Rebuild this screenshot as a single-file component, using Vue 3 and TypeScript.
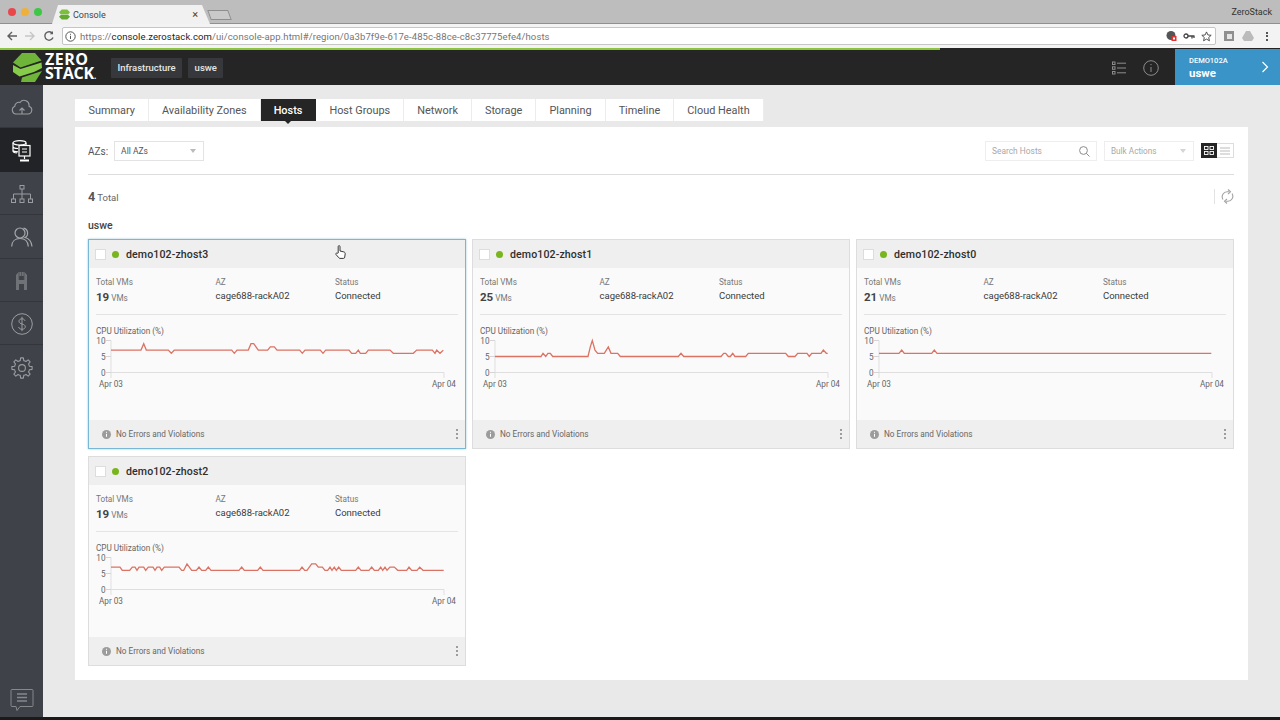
<script setup lang="ts">
interface Host {
  name: string
  vms: number
  selected: boolean
  start: number
  series: number[][]
}

const tabs: string[] = ['Summary', 'Availability Zones', 'Hosts', 'Host Groups', 'Network', 'Storage', 'Planning', 'Timeline', 'Cloud Health']
const yTicks: number[] = [10, 5, 0]

const hosts: Host[] = [
  {
    name: 'demo102-zhost3', vms: 19, selected: true, start: 78,
    series: [[78,7],[168,7],[176,9],[184,7],[250,7],[259,6],[268,7],[440,7],[448,6],[456,7],[490,7],[498,9],[506,9],[520,7],[548,7],[556,8],[568,8],[576,7],[644,7],[652,6],[660,7],[706,7],[714,6],[722,7],[792,7],[800,6],[812,6],[820,7],[826,6],[842,6],[850,7],[915,7],[925,6],[985,6],[995,7],[1042,7],[1050,6],[1055,7],[1065,6],[1075,7]],
  },
  {
    name: 'demo102-zhost1', vms: 25, selected: false, start: 76,
    series: [[76,5],[214,5],[220,6],[228,5],[235,6],[242,6],[249,5],[355,5],[362,8],[368,10],[376,7],[384,6],[404,6],[416,8],[424,6],[444,6],[452,5],[626,5],[634,6],[642,5],[754,5],[762,6],[768,6],[776,5],[782,5],[789,6],[796,5],[828,5],[836,6],[948,6],[956,5],[976,5],[984,6],[1012,6],[1019,5],[1026,6],[1054,6],[1061,7],[1070,6],[1074,6]],
  },
  {
    name: 'demo102-zhost0', vms: 21, selected: false, start: 73,
    series: [[73,6],[133,6],[141,7],[149,6],[231,6],[239,7],[247,6],[1070,6]],
  },
  {
    name: 'demo102-zhost2', vms: 19, selected: false, start: 78,
    series: [[78,7],[105,7],[112,6],[134,6],[142,7],[150,7],[156,6],[162,7],[176,7],[182,6],[190,7],[204,7],[210,6],[216,7],[224,7],[230,6],[238,7],[282,7],[290,6],[296,6],[306,8],[320,6],[334,6],[342,7],[350,6],[362,6],[370,7],[378,6],[462,6],[470,7],[478,6],[518,6],[526,7],[534,6],[644,6],[651,7],[659,6],[666,6],[680,8],[692,8],[700,7],[712,7],[720,6],[728,6],[735,7],[741,6],[748,7],[754,6],[761,7],[769,6],[812,6],[820,7],[828,6],[852,6],[860,7],[868,6],[880,6],[887,7],[893,6],[900,7],[906,6],[915,7],[928,7],[938,6],[965,6],[972,7],[980,6],[996,6],[1004,7],[1014,6],[1076,6]],
  },
]

function yOf(v: number): number {
  return 36.5 - v * 3.2
}

function points(h: Host): string {
  return h.series.map(([x, v]) => `${(15 + (x - h.start) / 3).toFixed(1)},${yOf(v).toFixed(1)}`).join(' ')
}

function gearPath(cx: number, cy: number, ro: number, ri: number, teeth: number): string {
  const out: string[] = []
  const step = (Math.PI * 2) / teeth
  for (let i = 0; i < teeth; i++) {
    const a = i * step - Math.PI / 2
    const pts: number[][] = [
      [ri, a - step * 0.5],
      [ri, a - step * 0.3],
      [ro, a - step * 0.17],
      [ro, a + step * 0.17],
      [ri, a + step * 0.3],
    ]
    for (const [r, t] of pts) {
      out.push(`${(cx + r * Math.cos(t)).toFixed(2)},${(cy + r * Math.sin(t)).toFixed(2)}`)
    }
  }
  return out.join(' ')
}
const gear = gearPath(11, 11, 10.2, 7.6, 8)
</script>

<template>
  <div class="page">
    <div class="tabstrip">
      <div class="lights">
        <span class="light red"></span>
        <span class="light amber"></span>
        <span class="light green"></span>
      </div>
      <div class="browser-tab">
        <svg class="favicon" width="11" height="11" viewBox="0 0 12 12">
          <path d="M3 .5h6l3 3-2 2.5H2L0 3.500z" fill="#7cbf3f" />
          <path d="M2 6.500h8l2 2-3 3H3l-3-3z" fill="#63a830" />
        </svg>
        <span class="tab-title">Console</span>
        <span class="tab-close">×</span>
      </div>
      <div class="new-tab"></div>
      <span class="chrome-user">ZeroStack</span>
    </div>

    <div class="toolbar">
      <svg class="nav-icon" width="12" height="12" viewBox="0 0 12 12" fill="none" stroke="#5f5f5f" stroke-width="1.400">
        <path d="M11 6H2M6 2 2 6l4 4" />
      </svg>
      <svg class="nav-icon" width="12" height="12" viewBox="0 0 12 12" fill="none" stroke="#c6c6c6" stroke-width="1.400">
        <path d="M1 6h9M6 2l4 4-4 4" />
      </svg>
      <svg class="nav-icon reload" width="12" height="12" viewBox="0 0 12 12" fill="none" stroke="#5f5f5f" stroke-width="1.400">
        <path d="M10 7.500A4.200 4.200 0 1 1 9.500 3.500" />
        <path d="M10 1v3.200H6.800" fill="#5f5f5f" stroke="none" />
      </svg>
      <div class="omnibox">
        <svg width="11" height="11" viewBox="0 0 11 11" fill="none" stroke="#555" stroke-width="1">
          <circle cx="5.500" cy="5.500" r="4.700" />
          <path d="M5.500 4.800v3.200M5.500 2.800v1" />
        </svg>
        <span class="url"><span class="url-dim">https://</span>console.zerostack.com<span class="url-dim">/ui/console-app.html#/region/0a3b7f9e-617e-485c-88ce-c8c37775efe4/hosts</span></span>
        <div class="omni-icons">
          <svg width="11" height="12" viewBox="0 0 11 12">
            <circle cx="5" cy="5.500" r="4.500" fill="#555" />
            <rect x="5.500" y="6" width="5" height="5" fill="#d33" />
            <rect x="7" y="7.500" width="2" height="2" fill="#fff" />
          </svg>
          <svg width="12" height="8" viewBox="0 0 12 8" fill="none" stroke="#444" stroke-width="1.300">
            <circle cx="3" cy="4" r="2" />
            <path d="M5 4h6.500M9 4v2.500M11 4v2" />
          </svg>
          <svg width="11" height="11" viewBox="0 0 12 12" fill="none" stroke="#444" stroke-width="1">
            <path d="M6 1l1.500 3.300 3.600.4-2.700 2.400.8 3.600L6 8.800l-3.200 1.900.8-3.600L.9 4.700l3.600-.4z" />
          </svg>
        </div>
      </div>
      <div class="ext-icons">
        <span class="ext ext-square"><span class="ext-inner"></span></span>
        <svg width="12" height="10" viewBox="0 0 12 10"><path d="M4 0h4l4 7-2 3H2L0 7z" fill="#bbb" /></svg>
        <span class="kebab-chrome"><i></i><i></i><i></i></span>
      </div>
    </div>

    <div class="loadbar"><div class="loadbar-fill"></div></div>

    <header class="appbar">
      <div class="brand">
        <svg width="29" height="29" viewBox="0 0 29 29">
          <polygon points="9,0 22,0 28.500,7.500 7.500,14.500 0,9.500" fill="#6fb53a" />
          <polygon points="0,12 7.500,16 28.500,9.500 29,15 21,19 6.500,23.500 0,19" fill="#86cc4a" />
          <polygon points="9,24.500 29,18 22,29 8,29" fill="#6fb53a" />
        </svg>
        <div class="wordmark"><span>ZERO</span><span>STACK<small>.</small></span></div>
      </div>
      <span class="chip">Infrastructure</span>
      <span class="chip">uswe</span>
      <div class="appbar-right">
        <svg class="bar-icon" width="14" height="14" viewBox="0 0 14 14" fill="none" stroke="#8d8d8d">
          <rect x=".5" y="1" width="2.500" height="2.500" />
          <rect x=".5" y="5.800" width="2.500" height="2.500" />
          <rect x=".5" y="10.500" width="2.500" height="2.500" />
          <path d="M5 2.200h9M5 7h9M5 11.800h9" />
        </svg>
        <svg class="bar-icon" width="16" height="16" viewBox="0 0 16 16" fill="none" stroke="#8d8d8d">
          <circle cx="8" cy="8" r="7.300" />
          <path d="M8 7v5M8 4v1.200" />
        </svg>
        <div class="region">
          <div class="region-text">
            <span class="region-org">DEMO102A</span>
            <span class="region-name">uswe</span>
          </div>
          <svg width="8" height="12" viewBox="0 0 8 12" fill="none" stroke="#fff" stroke-width="1.200">
            <path d="M1.500 1 6.500 6 1.500 11" />
          </svg>
        </div>
      </div>
    </header>

    <div class="workspace">
      <nav class="sidebar">
        <div class="side-item">
          <svg width="22" height="16" viewBox="0 0 22 16" fill="none" stroke="#9a9da1" stroke-width="1.100">
            <path d="M5 15h12a4 4 0 0 0 1-7.800A5 5 0 0 0 9 3.500 4 4 0 0 0 3.800 7.300 4 4 0 0 0 5 15z" />
            <path d="M11 15V9.500M8.500 11.500 11 9l2.500 2.500" />
          </svg>
        </div>
        <div class="side-item active">
          <svg width="19" height="22" viewBox="0 0 19 22" fill="none" stroke="#fff" stroke-width="1.200">
            <ellipse cx="7.500" cy="2.800" rx="6.500" ry="2.200" />
            <path d="M1 2.800V11c0 1 1.500 1.800 4 2M14 3v2M1 6.500c0 1 2 2 5 2M1 10c0 1 2 1.600 5 1.800" />
            <rect x="7" y="5.500" width="11" height="10.500" fill="#212326" />
            <path d="M10 9h5M10 12h5" />
            <path d="M12.500 16v3" />
            <path d="M8 20.500h9" stroke-width="2" />
          </svg>
        </div>
        <div class="side-item">
          <svg width="22" height="18" viewBox="0 0 22 18" fill="none" stroke="#9a9da1" stroke-width="1">
            <rect x="9" y=".5" width="4" height="3.500" />
            <rect x=".5" y="14" width="4" height="3.500" />
            <rect x="9" y="14" width="4" height="3.500" />
            <rect x="17.500" y="14" width="4" height="3.500" />
            <path d="M11 4v10M2.500 14V9h17v5" />
          </svg>
        </div>
        <div class="side-item">
          <svg width="22" height="20" viewBox="0 0 22 20" fill="none" stroke="#a5a8ac" stroke-width="1.200">
            <circle cx="9" cy="6" r="5" />
            <path d="M.7 19.500c0-5 3.500-8 8.300-8s8 3 8.300 8" />
            <path d="M12.500 1.200a5 5 0 0 1 1.500 9.300c4 1 6.500 4 7 9" />
          </svg>
        </div>
        <div class="side-item">
          <svg width="15" height="18" viewBox="0 0 15 18" fill="#6f7276">
            <path d="M2 3 4.500 0h6L13 3v15h-3v-6H5v6H2zM5 4v4h5V4z" />
            <path d="M5 0v8M7.500 0v4M10 0v8" stroke="#4d5056" stroke-width=".8" />
          </svg>
        </div>
        <div class="side-item">
          <svg width="22" height="22" viewBox="0 0 22 22" fill="none" stroke="#9a9da1" stroke-width="1">
            <circle cx="11" cy="11" r="10.300" />
            <path d="M14 7.800c-.5-1.500-1.700-2-3-2-1.700 0-3 1-3 2.500 0 3.500 6.300 2 6.300 5.500 0 1.500-1.500 2.500-3.300 2.500-1.500 0-3-.8-3.400-2.300M11 3.800v14.400" />
          </svg>
        </div>
        <div class="side-item last">
          <svg width="22" height="22" viewBox="0 0 22 22" fill="none" stroke="#9a9da1" stroke-width="1.100">
            <polygon :points="gear" stroke-linejoin="round" />
            <circle cx="11" cy="11" r="3.400" />
          </svg>
        </div>
        <div class="side-chat">
          <svg width="24" height="24" viewBox="0 0 24 24" fill="none" stroke="#85888c" stroke-width="1">
            <path d="M2 1.500h20a1 1 0 0 1 1 1v15a1 1 0 0 1-1 1H10l-3 4-1-4H2a1 1 0 0 1-1-1v-15a1 1 0 0 1 1-1z" />
            <path d="M7 6h10M7 9.500h10M7 13h10" stroke-width="1.500" />
          </svg>
        </div>
      </nav>

      <main class="content">
        <div class="tabs">
          <span v-for="t in tabs" :key="t" class="tab" :class="{ current: t === 'Hosts' }">{{ t }}</span>
        </div>

        <section class="panel">
          <div class="filters">
            <span class="az-label">AZs:</span>
            <div class="select az-select">
              <span>All AZs</span>
              <i class="caret"></i>
            </div>
            <div class="filters-right">
              <div class="search">
                <span>Search Hosts</span>
                <svg width="11" height="11" viewBox="0 0 11 11" fill="none" stroke="#8c8c8c">
                  <circle cx="4.500" cy="4.500" r="3.900" />
                  <path d="M7.300 7.300 10.500 10.500" />
                </svg>
              </div>
              <div class="select bulk">
                <span>Bulk Actions</span>
                <i class="caret"></i>
              </div>
              <div class="view-toggle">
                <span class="view on">
                  <svg width="10" height="9" viewBox="0 0 10 9" fill="none" stroke="#fff" stroke-width=".9">
                    <rect x=".5" y=".5" width="3.500" height="3" />
                    <rect x="6" y=".5" width="3.500" height="3" />
                    <rect x=".5" y="5.500" width="3.500" height="3" />
                    <rect x="6" y="5.500" width="3.500" height="3" />
                  </svg>
                </span>
                <span class="view">
                  <svg width="10" height="8" viewBox="0 0 10 8" fill="none" stroke="#bbb">
                    <path d="M0 1h10M0 4h10M0 7h10" />
                  </svg>
                </span>
              </div>
            </div>
          </div>

          <div class="summary">
            <span class="total"><b>4</b> Total</span>
            <div class="refresh">
              <svg width="13" height="15" viewBox="0 0 13 15" fill="none" stroke="#a2a2a2" stroke-width="1.100">
                <path d="M2 10.500A5 5 0 0 1 6.500 2.800h1.500M11 4.500a5 5 0 0 1-4.500 7.700H5" />
                <path d="M7 .5 9.500 2.800 7 5M6 10 3.500 12.200 6 14.500" />
              </svg>
            </div>
          </div>

          <h2 class="group">uswe</h2>

          <div class="grid">
            <article v-for="h in hosts" :key="h.name" class="card" :class="{ selected: h.selected }">
              <div class="card-head">
                <span class="check"></span>
                <span class="dot"></span>
                <span class="host-name">{{ h.name }}</span>
                <svg v-if="h.selected" class="cursor" width="11" height="14" viewBox="0 0 11 14" fill="#fff" stroke="#222" stroke-width=".9">
                  <path d="M3.200 8V1.600c0-1.300 1.800-1.300 1.800 0V6l3.800.9c1 .3 1.500 1 1.400 2l-.5 3.300c-.1.800-.5 1.200-1.300 1.200H5c-.6 0-1-.3-1.300-.8L1 9.500c-.6-1 .6-2 1.500-1.200z" />
                </svg>
              </div>
              <div class="card-body">
                <div class="stats">
                  <div class="stat">
                    <span class="stat-label">Total VMs</span>
                    <span class="stat-vms"><b>{{ h.vms }}</b> VMs</span>
                  </div>
                  <div class="stat">
                    <span class="stat-label">AZ</span>
                    <span class="stat-value">cage688-rackA02</span>
                  </div>
                  <div class="stat">
                    <span class="stat-label">Status</span>
                    <span class="stat-value">Connected</span>
                  </div>
                </div>
                <div class="cpu-title">CPU Utilization (%)</div>
                <svg class="chart" width="362" height="54" viewBox="0 0 362 54">
                  <path d="M15 4.500V36.500H348M348 36.500V42M15 36.500V42" fill="none" stroke="#dfdfdf" />
                  <g v-for="t in yTicks" :key="t">
                    <path :d="`M10 ${yOf(t)}H15`" stroke="#d5d5d5" />
                    <text class="tick" x="9.500" :y="yOf(t) + 3.200" text-anchor="end">{{ t }}</text>
                  </g>
                  <text class="tick" x="15" y="51" text-anchor="middle">Apr 03</text>
                  <text class="tick" x="348" y="51" text-anchor="middle">Apr 04</text>
                  <polyline :points="points(h)" fill="none" stroke="#dc7263" stroke-width="1.300" />
                </svg>
              </div>
              <div class="card-foot">
                <svg width="9" height="9" viewBox="0 0 9 9">
                  <circle cx="4.500" cy="4.500" r="4.500" fill="#9c9c9c" />
                  <path d="M4.500 3.800v3M4.500 1.800v1" stroke="#fff" />
                </svg>
                <span class="foot-text">No Errors and Violations</span>
                <span class="kebab"><i></i><i></i><i></i></span>
              </div>
            </article>
          </div>
        </section>
      </main>
    </div>
    <div class="screen-edge"></div>
  </div>
</template>

<style>
html, body { margin: 0; padding: 0; background: #111; }
</style>

<style scoped>
.page {
  width: 1280px;
  height: 720px;
  overflow: hidden;
  display: flex;
  flex-direction: column;
  font-family: Roboto, "Liberation Sans", sans-serif;
  color: #444;
  background: #e9e9e9;
}

/* browser chrome */
.tabstrip {
  height: 24px;
  flex: none;
  background: #bdbdbd;
  display: flex;
  align-items: flex-end;
  border-bottom: 1px solid #8f8f8f;
  box-sizing: border-box;
}
.lights {
  display: flex;
  gap: 5px;
  width: 52px;
  box-sizing: border-box;
  padding-left: 8px;
  align-self: flex-start;
  padding-top: 8px;
}
.light { width: 8px; height: 8px; border-radius: 50%; }
.red { background: #e8474c; }
.amber { background: #efb03a; }
.green { background: #3ec746; }
.browser-tab {
  width: 158px;
  height: 19px;
  background: #f1f1f1;
  clip-path: polygon(0 100%, 6px 0, 150px 0, 100% 100%);
  display: flex;
  align-items: center;
  padding: 0 12px 0 7px;
  box-sizing: border-box;
  gap: 3px;
  margin-bottom: -1px;
}
.favicon { flex: none; margin-left: 0; }
.tab-title { font-size: 9px; color: #444; flex: 1; }
.tab-close { font-size: 11px; color: #444; }
.new-tab {
  width: 21px;
  height: 10px;
  margin: 0 0 3px -1px;
  background: #c9c9c9;
  border: 1px solid #8e8e8e;
  transform: skewX(20deg);
  box-sizing: border-box;
}
.chrome-user {
  margin-left: auto;
  margin-right: 8px;
  align-self: center;
  font-size: 9px;
  color: #333;
}
.toolbar {
  height: 24px;
  flex: none;
  background: #f3f3f3;
  display: flex;
  align-items: center;
  padding-left: 6px;
  box-sizing: border-box;
  gap: 6px;
}
.nav-icon { flex: none; }
.reload { margin-left: 1px; }
.omnibox {
  width: 1154px;
  height: 18px;
  margin-left: 1px;
  flex: none;
  background: #fff;
  border: 1px solid #c5c5c5;
  border-radius: 2px;
  box-sizing: border-box;
  display: flex;
  align-items: center;
  padding: 0 3px 0 2px;
  gap: 4px;
}
.url { font-size: 9.520px; color: #222; white-space: nowrap; letter-spacing: 0.010em; }
.url-dim { color: #757575; }
.omni-icons { margin-left: auto; display: flex; align-items: center; gap: 6px; }
.ext-icons { display: flex; align-items: center; gap: 8px; margin-left: 2px; }
.ext-square { width: 10px; height: 10px; background: #8f8f8f; display: flex; align-items: center; justify-content: center; }
.ext-inner { width: 5px; height: 5px; background: #e5e5e5; }
.kebab-chrome { display: flex; flex-direction: column; gap: 1.500px; margin-left: 4px; }
.kebab-chrome i { width: 2px; height: 2px; background: #555; }
.loadbar { height: 2px; flex: none; background: #242424; }
.loadbar-fill { width: 940px; height: 2px; background: #8cc63f; }

/* application header */
.appbar {
  height: 35px;
  flex: none;
  background: #252525;
  display: flex;
  align-items: center;
  padding-left: 13px;
  box-sizing: border-box;
}
.brand { display: flex; align-items: center; gap: 3px; width: 92px; }
.wordmark {
  display: flex;
  flex-direction: column;
  color: #fff;
  font-family: "Open Sans", Roboto, sans-serif;
  font-weight: 700;
  font-size: 16px;
  line-height: 13.500px;
  letter-spacing: -0.2px;
}
.wordmark small { font-size: 8px; }
.wordmark span:first-child { letter-spacing: 0.5px; }
.chip {
  height: 20px;
  line-height: 20px;
  padding: 0 6.500px;
  margin-left: 6px;
  background: #36383b;
  color: #e6e6e6;
  font-size: 9.500px;
  font-weight: 500;
  border-radius: 1px;
}
.appbar-right { margin-left: auto; height: 100%; display: flex; align-items: center; }
.bar-icon { margin-right: 17px; }
.region {
  width: 105px;
  height: 36px;
  margin-top: -1px;
  background: #3a94c7;
  display: flex;
  align-items: center;
  justify-content: space-between;
  padding: 0 11px 0 14px;
  box-sizing: border-box;
  color: #fff;
  margin-left: -1px;
}
.region-text { display: flex; flex-direction: column; }
.region-org { font-size: 7.500px; font-weight: 500; line-height: 11px; }
.region-name { font-size: 11.500px; font-weight: 700; line-height: 14px; }

/* sidebar */
.workspace { flex: 1; min-height: 0; display: flex; }
.sidebar {
  width: 43px;
  flex: none;
  background: #3f4248;
  display: flex;
  flex-direction: column;
}
.side-item {
  height: 43.400px;
  flex: none;
  display: flex;
  align-items: center;
  justify-content: center;
  padding-top: 2px;
  border-bottom: 1px solid #34363b;
  box-sizing: border-box;
}
.side-item.active { background: #212326; border-bottom-color: #212326; }
.side-item.last { border-bottom: none; }
.side-chat { margin-top: auto; height: 29px; display: flex; align-items: flex-start; justify-content: center; }

/* content */
.content { flex: 1; min-width: 0; padding: 14px 32px 0 32px; box-sizing: border-box; }
.tabs { display: flex; width: fit-content; height: 22px; background: #fff; padding-left: 0.500px; }
.tab {
  position: relative;
  padding: 1px 13px 0;
  height: 22px;
  box-sizing: border-box;
  line-height: 21px;
  font-size: 10.900px;
  color: #555;
  border-right: 1px solid #ececec;
  white-space: nowrap;
}
.tab.current { background: #252525; color: #fff; font-weight: 500; border-right-color: #252525; }
.tab.current::after {
  content: "";
  position: absolute;
  left: 50%;
  bottom: -3px;
  margin-left: -4px;
  border-left: 4px solid transparent;
  border-right: 4px solid transparent;
  border-top: 4px solid #252525;
}
.panel {
  margin-top: 6px;
  height: 553px;
  background: #fff;
  padding: 14px 14px 0 13px;
  box-sizing: border-box;
}
.filters {
  display: flex;
  align-items: center;
  height: 34px;
  padding-bottom: 14px;
  box-sizing: border-box;
  border-bottom: 1px solid #ddd;
}
.az-label { font-size: 10px; color: #555; margin-right: 6px; padding-top: 1px; }
.select {
  height: 20px;
  border: 1px solid #e3e3e3;
  box-sizing: border-box;
  display: flex;
  align-items: center;
  justify-content: space-between;
  font-size: 8.500px;
  padding: 1px 7px 0 6px;
}
.az-select { width: 90px; color: #555; }
.caret {
  width: 0;
  height: 0;
  border-left: 3.500px solid transparent;
  border-right: 3.500px solid transparent;
  border-top: 4px solid #bbb;
}
.filters-right { margin-left: auto; display: flex; align-items: center; }
.search {
  width: 112px;
  height: 20px;
  border: 1px solid #eee;
  box-sizing: border-box;
  display: flex;
  align-items: center;
  justify-content: space-between;
  padding: 1px 6px 0;
  font-size: 8.400px;
  color: #a8a8a8;
}
.bulk { width: 90px; margin-left: 7px; color: #a8a8a8; border-color: #eee; font-size: 8.200px; }
.bulk .caret { border-top-color: #d5d5d5; }
.view-toggle { display: flex; margin-left: 7px; }
.view {
  width: 16px;
  height: 15px;
  display: flex;
  align-items: center;
  justify-content: center;
  border: 1px solid #ddd;
  box-sizing: border-box;
}
.view.on { background: #252525; border-color: #252525; }
.view:last-child { width: 17px; border-left: none; }
.summary {
  display: flex;
  align-items: center;
  justify-content: space-between;
  height: 28px;
  margin-top: 7px;
}
.total { font-size: 9.500px; color: #666; }
.total b { font-size: 12.500px; color: #555; font-weight: 700; }
.refresh {
  height: 15px;
  border-left: 1px solid #e3e3e3;
  padding-left: 6px;
  display: flex;
  align-items: center;
}
.group {
  margin: 9px 0 7px;
  height: 13px;
  line-height: 13px;
  font-size: 10.500px;
  font-weight: 500;
  color: #444;
}
.grid {
  display: grid;
  grid-template-columns: repeat(3, 378px);
  grid-auto-rows: 210px;
  column-gap: 6px;
  row-gap: 7px;
}
.card {
  border: 1px solid #ddd;
  box-sizing: border-box;
  background: #fafafa;
  display: flex;
  flex-direction: column;
}
.card.selected { border-color: #79b8d4; box-shadow: 0 0 2px #9cc8da; }
.card-head {
  position: relative;
  height: 28px;
  flex: none;
  background: #efefef;
  display: flex;
  align-items: center;
  padding-left: 6px;
}
.check {
  width: 11px;
  height: 11px;
  background: #fff;
  border: 1px solid #ddd;
  box-sizing: border-box;
}
.dot {
  width: 7px;
  height: 7px;
  border-radius: 50%;
  background: #7ab51d;
  margin-left: 6px;
}
.host-name { margin-left: 7px; font-size: 10.600px; font-weight: 500; color: #2e2e2e; letter-spacing: 0.010em; }
.cursor { position: absolute; left: 246px; top: 5px; }
.card-body { flex: 1; min-height: 0; padding: 9px 7px 0; }
.stats {
  display: grid;
  grid-template-columns: 119.500px 119.500px 1fr;
  height: 38px;
  border-bottom: 1px solid #e4e4e4;
  box-sizing: border-box;
}
.stat { display: flex; flex-direction: column; }
.stat-label { font-size: 8.200px; line-height: 10px; color: #777; }
.stat-value { font-size: 9.500px; line-height: 18px; color: #3a3a3a; }
.stat-vms { font-size: 8.200px; line-height: 16px; margin-top: 2px; color: #777; }
.stat-vms b { font-size: 11.500px; color: #444; font-weight: 700; }
.cpu-title { margin-top: 11px; font-size: 8.200px; line-height: 10px; color: #666; }
.chart { display: block; }
.tick { font-size: 8.200px; fill: #666; font-family: Roboto, sans-serif; }
.card-foot {
  height: 28px;
  flex: none;
  background: #efefef;
  display: flex;
  align-items: center;
  padding: 0 7px 0 13px;
}
.foot-text { margin-left: 5px; font-size: 8.200px; color: #666; }
.kebab { margin-left: auto; display: flex; flex-direction: column; gap: 2px; }
.kebab i { width: 2px; height: 2px; background: #9c9c9c; }
.screen-edge { height: 3px; flex: none; background: #1a1a1a; }
</style>
